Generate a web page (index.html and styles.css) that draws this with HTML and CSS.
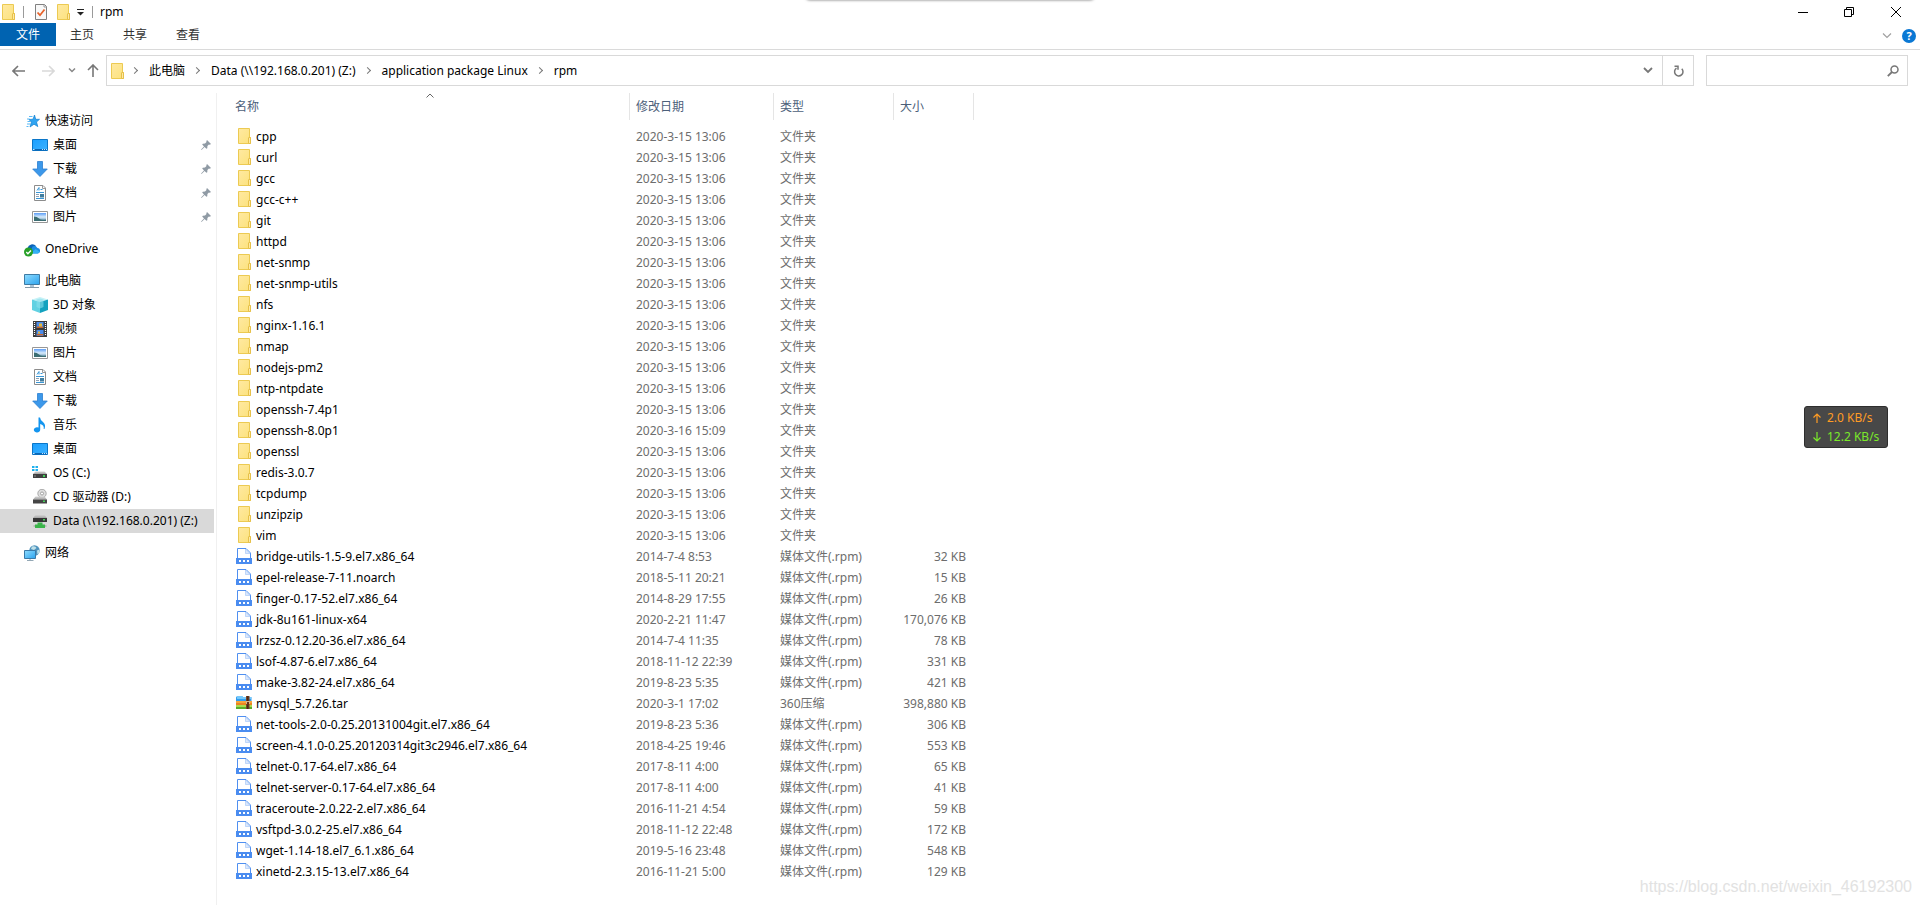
FILE: index.html
```html
<!DOCTYPE html>
<html lang="zh-CN">
<head>
<meta charset="utf-8">
<title>rpm</title>
<link rel="stylesheet" href="styles.css">
</head>
<body>
<svg class="sprite" aria-hidden="true">
  <defs>
    <linearGradient id="g-folder" x1="0" y1="0" x2="1" y2="1"><stop offset="0" stop-color="#ffe9a2"/><stop offset="1" stop-color="#fce27c"/></linearGradient>
    <linearGradient id="g-desk" x1="0" y1="0" x2="1" y2="1"><stop offset="0" stop-color="#1a9fff"/><stop offset="1" stop-color="#3db2ff"/></linearGradient>
    <linearGradient id="g-pc" x1="0" y1="0" x2="1" y2="1"><stop offset="0" stop-color="#8fdcff"/><stop offset="1" stop-color="#2ba3ee"/></linearGradient>
    <linearGradient id="g-pic" x1="0" y1="0" x2="0" y2="1"><stop offset="0" stop-color="#5b9cf5"/><stop offset=".5" stop-color="#d8ecfb"/><stop offset="1" stop-color="#5d8fb0"/></linearGradient>
    <linearGradient id="g-drive" x1="0" y1="0" x2="0" y2="1"><stop offset="0" stop-color="#d4d4d4"/><stop offset="1" stop-color="#a4a4a4"/></linearGradient>
  </defs>
  <symbol id="folder" viewBox="0 0 16 16"><path d="M2.500.5h11v9h1v6h-12z" fill="url(#g-folder)" stroke="#ecca52"/><path d="M12.500 15.500v-5.500q0-.5.5-.5h1.500v6z" fill="#ffeaa4" stroke="#e6c04a"/></symbol>
  <symbol id="rpm" viewBox="0 0 16 16"><path d="M1.500 10V.5h8.500l4.500 4.500v5" fill="#fff" stroke="#4f8ff0"/><path d="M9.500 1v4.500H14z" fill="#dbe8fc" stroke="#a9c8f8" stroke-width=".7"/><path d="M0 10h16v6H0z" fill="#4a8cf0"/><path d="M3 12h2v2H3zm4 0h2v2H7zm4 0h2v2h-2z" fill="#fff"/></symbol>
  <symbol id="zip" viewBox="0 0 16 16"><path d="M0 2.500 1 1h5l1 1h8.500v5H0z" fill="#2f9df0"/><path d="M1 1h5l1 1h8v2H1z" fill="#75c8fa"/><path d="M0 6h16v4H0z" fill="#f6a43c"/><path d="M0 8h16v2H0z" fill="#ec8420"/><path d="M0 10h16v2H0z" fill="#a8dc50"/><path d="M0 12h16v2H0z" fill="#5aac2c"/><path d="M10 1h3.500v13H10z" fill="#7b4526"/><path d="M11 1h1.500v13H11z" fill="#4b2817"/><path d="M10 6h4v3h-4z" fill="#d7b48a"/><path d="M11 7h2v3h-2z" fill="#633018"/></symbol>
  <symbol id="star" viewBox="0 0 16 16"><path d="m10.500 2 1.200 4.300H15.500L12.500 9l1.300 4.600L10 11.200 6 14 7.400 9.200 5 6.500l4-.3z" fill="#2fa4f2" stroke="#1380d0" stroke-width=".7"/><path d="M5 3.500h3.500M3 6h2.700M3.500 8.500H6M3 11h3.500M2.500 13.500h2" stroke="#46b1f5" stroke-width=".9"/></symbol>
  <symbol id="desktop" viewBox="0 0 16 16"><path d="M.5 2.500h15v11H.5z" fill="url(#g-desk)" stroke="#0b76c8"/><path d="M1 12h14v1.500H1z" fill="#0a66b5"/><path d="M1 12.500h1.500m7.500 0h1m1 0h1m1 0h1" stroke="#c5e6ff"/></symbol>
  <symbol id="download" viewBox="0 0 16 16"><path d="M5.500.5h5v7.500h4.800L8 15.500.7 8H5.500z" fill="#3c98ea" stroke="#2b7fd0" stroke-width=".8"/></symbol>
  <symbol id="doc" viewBox="0 0 16 16"><path d="M2.500.5h8.500l2.500 2.500v12.500h-11z" fill="#fff" stroke="#8c8c8c"/><path d="M10.500.5v3h3" fill="none" stroke="#9a9a9a"/><path d="M5 5.500 7 2.500v3M8.500 4.500h2M4 7.500h8M4 13.500h8" fill="none" stroke="#3996d6"/><path d="M4 9.500h3m-3 2h3" stroke="#8aa0b4"/><path d="M8 9h4v3.500H8z" fill="#407d9e"/></symbol>
  <symbol id="picture" viewBox="0 0 16 16"><path d="M.5 2.500h15v11H.5z" fill="#fff" stroke="#979797"/><path d="M2 4h12v8H2z" fill="url(#g-pic)"/><path d="M2 7.500q3 0 5 2t7 1v1.500H2z" fill="#3b6d72"/></symbol>
  <symbol id="pin" viewBox="0 0 10 10"><path d="M6 0 10 4 8.800 4.700 7.900 4.500 6.400 6 6.300 8.200 5.400 8.800 3.600 7 .8 9.700.2 9.900.3 9.200 3 6.400 1.200 4.600 1.800 3.700 4 3.600 5.500 2.100 5.300 1.200z" fill="#8f9aa4"/></symbol>
  <symbol id="onedrive" viewBox="0 0 16 16"><path d="M3.500 7A5 5 0 0 1 12 5l-3 6H3z" fill="#0a62b8"/><path d="M6 11.500 8.500 5.500a4 4 0 0 1 5 1.500 2.800 2.800 0 0 1 .5 5.500H7z" fill="#1a8de2"/><path d="M7 12.500 11.500 8l4 2.500a2.500 2.500 0 0 1-2 2z" fill="#34b1f5"/><circle cx="4.500" cy="11" r="4.500" fill="#28a028"/><path d="m2.300 11 1.600 1.700L7 9.500" fill="none" stroke="#fff" stroke-width="1.400"/></symbol>
  <symbol id="pc" viewBox="0 0 16 16"><path d="M.5 1.500h15v10H.5z" fill="url(#g-pc)" stroke="#3e7ba4"/><path d="M6 12h4v2H6z" fill="#a9c2d3"/><path d="M1 14.500h14" stroke="#8499a8"/></symbol>
  <symbol id="cube" viewBox="0 0 16 16"><path d="m0 2.500 8-2.500 8 2.500L8 5z" fill="#c7f2f7"/><path d="m0 2.500 8 2.500v11l-8-3z" fill="#62d1e2"/><path d="M8 5 16 2.500V13l-8 3z" fill="#13a2bf"/><path d="m4.500 2.500 3.500-1 3.500 1V10L8 11.500 4.500 10z" fill="#8be0ec" opacity=".6"/></symbol>
  <symbol id="video" viewBox="0 0 16 16"><path d="M1 0h14v16H1z" fill="#3b3b3b"/><path d="M2.500 1v14m11-14v14" stroke="#fff" stroke-width="1.200" stroke-dasharray="1 1"/><path d="M4.500 1h7v6h-7zm0 8h7v6h-7z" fill="#4b8bea"/><path d="M5 5.500h6V7H5zm0 7.500h6v1.500H5z" fill="#c9652c"/><path d="M7 2.500h3v3H7zm-1 8h2v2H6z" fill="#e3b83b"/></symbol>
  <symbol id="music" viewBox="0 0 16 16"><path d="M6.500.5H8q.3 2.500 3 4.600 3.200 2.600 1.500 6.900h-.8q.7-3.800-3.500-5v5.600A3.200 2.600 0 1 1 6.500 10.500z" fill="#1495ef"/></symbol>
  <symbol id="osdrive" viewBox="0 0 16 16"><path d="M0 1h2.500v2H0zm3.500 0H6v2H3.500zM0 4h2.500v2H0zm3.500 0H6v2H3.500z" fill="#1fb1ee"/><path d="m3.500 6.500h9L15 9H1z" fill="url(#g-drive)"/><path d="M1 9h14v4H1z" fill="#404040"/><path d="M2 11h2" stroke="#8a8a8a"/><path d="M11 10h2v2h-2z" fill="#44d15a"/></symbol>
  <symbol id="cddrive" viewBox="0 0 16 16"><circle cx="10" cy="4.500" r="4.200" fill="#dedede" stroke="#9a9a9a" stroke-width=".8"/><circle cx="10" cy="4.500" r="1.500" fill="#fff" stroke="#888" stroke-width=".7"/><path d="m3.500 7.500h9L15 10.500H1z" fill="url(#g-drive)"/><path d="M1 10.500h14v4H1z" fill="#444"/><path d="M11 11.500h2v1.500h-2z" fill="#44d15a"/></symbol>
  <symbol id="netdrive" viewBox="0 0 16 16"><path d="m3.500 2h9L15 5H1z" fill="url(#g-drive)"/><path d="M1 5h14v4H1z" fill="#363636"/><path d="M11 6h2v1.500h-2z" fill="#44d15a"/><path d="M5.500 9.500h5v2h2.500v3.500H3v-3.500h2.500z" fill="#3bb54a"/><path d="M1.500 13H3m10 0h1.500" stroke="#b6bcb6" stroke-width="2"/></symbol>
  <symbol id="network" viewBox="0 0 16 16"><circle cx="10.500" cy="5.500" r="5.200" fill="#4f93bd"/><path d="M8 1.500q3.500-1 4.500 1.500L10 5 7 4zm5 4 2.500-1v3l-2 2z" fill="#bfe0e8"/><path d="M.5 5.500h11v8H.5z" fill="url(#g-pc)" stroke="#3a7aa8"/><path d="M3 15.500h6.500M6 14v1" stroke="#94a8b5"/></symbol>
</svg>

<header class="window-head">
  <div class="titlebar">
    <svg class="icon"><use href="#folder"/></svg>
    <span class="bar"></span>
    <button class="plain quick" aria-label="属性"><svg class="icon" viewBox="0 0 16 16"><path d="M2.500.5h9l2 2v13h-11z" fill="#f8f8f8" stroke="#808080"/><path d="M11 .5v2.500h2.500" fill="none" stroke="#999"/><path d="m4.500 8.500 2.500 2.700 4.500-5.700" fill="none" stroke="#e8622a" stroke-width="1.800"/></svg></button>
    <button class="plain" aria-label="新建文件夹"><svg class="icon"><use href="#folder"/></svg></button>
    <button class="plain more" aria-label="自定义快速访问工具栏"><svg width="8" height="8" viewBox="0 0 8 8"><path d="M0 1.500h7" stroke="#222"/><path d="M0 4h7L3.500 7.500z" fill="#222"/></svg></button>
    <span class="bar"></span>
    <h1 class="title">rpm</h1>
    <div class="controls">
      <button class="plain" aria-label="最小化"><svg width="10" height="10" viewBox="0 0 10 10"><path d="M0 5.500h10" stroke="#000"/></svg></button>
      <button class="plain" aria-label="还原"><svg width="10" height="10" viewBox="0 0 10 10"><path d="M.5 2.500h7v7h-7zM2.500 2V.5h7v7H8" fill="none" stroke="#000"/></svg></button>
      <button class="plain" aria-label="关闭"><svg width="10" height="10" viewBox="0 0 10 10"><path d="m0 0 10 10M10 0 0 10" stroke="#000"/></svg></button>
    </div>
  </div>
  <nav class="tabs">
    <button class="tab tab-file">文件</button>
    <button class="tab">主页</button>
    <button class="tab">共享</button>
    <button class="tab">查看</button>
    <div class="help">
      <button class="plain" aria-label="展开功能区"><svg width="10" height="6" viewBox="0 0 10 6"><path d="m1 .5 4 4 4-4" fill="none" stroke="#a0a0a0" stroke-width="1.200"/></svg></button>
      <button class="help-button" aria-label="帮助">?</button>
    </div>
  </nav>
  <div class="tray-shadow"></div>
</header>

<div class="address-row">
  <div class="history">
    <button class="plain" aria-label="后退"><svg width="13" height="12" viewBox="0 0 13 12"><path d="M1 6h12M6 1 1 6l5 5" fill="none" stroke="#777" stroke-width="1.600"/></svg></button>
    <button class="plain" aria-label="前进"><svg width="13" height="12" viewBox="0 0 13 12"><path d="M0 6h12M7 1l5 5-5 5" fill="none" stroke="#d9d9d9" stroke-width="1.600"/></svg></button>
    <button class="plain recent" aria-label="最近浏览的位置"><svg width="8" height="5" viewBox="0 0 8 5"><path d="m1 .5 3 3 3-3" fill="none" stroke="#888" stroke-width="1.500"/></svg></button>
    <button class="plain" aria-label="上移"><svg width="12" height="13" viewBox="0 0 12 13"><path d="M6 13V1M1 6l5-5 5 5" fill="none" stroke="#777" stroke-width="1.600"/></svg></button>
  </div>
  <div class="address">
    <svg class="icon"><use href="#folder"/></svg>
    <ol class="crumbs">
      <li><a href="#">此电脑</a></li>
      <li><a href="#">Data (\\192.168.0.201) (Z:)</a></li>
      <li><a href="#">application package Linux</a></li>
      <li><a href="#">rpm</a></li>
    </ol>
    <button class="plain drop" aria-label="历史地址"><svg width="10" height="7" viewBox="0 0 10 7"><path d="m1 1 4 4 4-4" fill="none" stroke="#777" stroke-width="1.800"/></svg></button>
    <button class="plain refresh" aria-label="刷新"><svg width="11" height="12" viewBox="0 0 11 12"><path d="M8.800 3.800A4.200 4.200 0 1 1 3.500 3.200M1.500 1.200H5v3.600" fill="none" stroke="#777" stroke-width="1.500"/></svg></button>
  </div>
  <label class="search">
    <input type="search" aria-label="搜索">
    <svg width="12" height="12" viewBox="0 0 12 12"><circle cx="7.500" cy="4.500" r="3.500" fill="none" stroke="#777" stroke-width="1.500"/><path d="M5 7 .8 11.200" stroke="#777" stroke-width="1.800"/></svg>
  </label>
</div>

<main class="content">
  <nav class="sidebar">
    <ul class="group">
      <li><a class="item" href="#"><svg class="icon"><use href="#star"/></svg>快速访问</a></li>
      <li><a class="item child" href="#"><svg class="icon"><use href="#desktop"/></svg>桌面<svg class="pin"><use href="#pin"/></svg></a></li>
      <li><a class="item child" href="#"><svg class="icon"><use href="#download"/></svg>下载<svg class="pin"><use href="#pin"/></svg></a></li>
      <li><a class="item child" href="#"><svg class="icon"><use href="#doc"/></svg>文档<svg class="pin"><use href="#pin"/></svg></a></li>
      <li><a class="item child" href="#"><svg class="icon"><use href="#picture"/></svg>图片<svg class="pin"><use href="#pin"/></svg></a></li>
    </ul>
    <ul class="group">
      <li><a class="item" href="#"><svg class="icon"><use href="#onedrive"/></svg>OneDrive</a></li>
    </ul>
    <ul class="group">
      <li><a class="item" href="#"><svg class="icon"><use href="#pc"/></svg>此电脑</a></li>
      <li><a class="item child" href="#"><svg class="icon"><use href="#cube"/></svg>3D 对象</a></li>
      <li><a class="item child" href="#"><svg class="icon"><use href="#video"/></svg>视频</a></li>
      <li><a class="item child" href="#"><svg class="icon"><use href="#picture"/></svg>图片</a></li>
      <li><a class="item child" href="#"><svg class="icon"><use href="#doc"/></svg>文档</a></li>
      <li><a class="item child" href="#"><svg class="icon"><use href="#download"/></svg>下载</a></li>
      <li><a class="item child" href="#"><svg class="icon"><use href="#music"/></svg>音乐</a></li>
      <li><a class="item child" href="#"><svg class="icon"><use href="#desktop"/></svg>桌面</a></li>
      <li><a class="item child" href="#"><svg class="icon"><use href="#osdrive"/></svg>OS (C:)</a></li>
      <li><a class="item child" href="#"><svg class="icon"><use href="#cddrive"/></svg>CD 驱动器 (D:)</a></li>
      <li><a class="item child selected" href="#"><svg class="icon"><use href="#netdrive"/></svg>Data (\\192.168.0.201) (Z:)</a></li>
    </ul>
    <ul class="group">
      <li><a class="item" href="#"><svg class="icon"><use href="#network"/></svg>网络</a></li>
    </ul>
  </nav>

  <table class="files">
    <colgroup><col class="col-name"><col class="col-date"><col class="col-type"><col class="col-size"></colgroup>
    <thead>
      <tr><th>名称<svg class="sort" viewBox="0 0 8 5"><path d="m.5 4.500 3.500-3.500 3.500 3.500" fill="none" stroke="#666"/></svg></th><th>修改日期</th><th>类型</th><th>大小</th></tr>
    </thead>
    <tbody>
      <tr><td><svg class="icon"><use href="#folder"/></svg>cpp</td><td>2020-3-15 13:06</td><td>文件夹</td><td></td></tr>
      <tr><td><svg class="icon"><use href="#folder"/></svg>curl</td><td>2020-3-15 13:06</td><td>文件夹</td><td></td></tr>
      <tr><td><svg class="icon"><use href="#folder"/></svg>gcc</td><td>2020-3-15 13:06</td><td>文件夹</td><td></td></tr>
      <tr><td><svg class="icon"><use href="#folder"/></svg>gcc-c++</td><td>2020-3-15 13:06</td><td>文件夹</td><td></td></tr>
      <tr><td><svg class="icon"><use href="#folder"/></svg>git</td><td>2020-3-15 13:06</td><td>文件夹</td><td></td></tr>
      <tr><td><svg class="icon"><use href="#folder"/></svg>httpd</td><td>2020-3-15 13:06</td><td>文件夹</td><td></td></tr>
      <tr><td><svg class="icon"><use href="#folder"/></svg>net-snmp</td><td>2020-3-15 13:06</td><td>文件夹</td><td></td></tr>
      <tr><td><svg class="icon"><use href="#folder"/></svg>net-snmp-utils</td><td>2020-3-15 13:06</td><td>文件夹</td><td></td></tr>
      <tr><td><svg class="icon"><use href="#folder"/></svg>nfs</td><td>2020-3-15 13:06</td><td>文件夹</td><td></td></tr>
      <tr><td><svg class="icon"><use href="#folder"/></svg>nginx-1.16.1</td><td>2020-3-15 13:06</td><td>文件夹</td><td></td></tr>
      <tr><td><svg class="icon"><use href="#folder"/></svg>nmap</td><td>2020-3-15 13:06</td><td>文件夹</td><td></td></tr>
      <tr><td><svg class="icon"><use href="#folder"/></svg>nodejs-pm2</td><td>2020-3-15 13:06</td><td>文件夹</td><td></td></tr>
      <tr><td><svg class="icon"><use href="#folder"/></svg>ntp-ntpdate</td><td>2020-3-15 13:06</td><td>文件夹</td><td></td></tr>
      <tr><td><svg class="icon"><use href="#folder"/></svg>openssh-7.4p1</td><td>2020-3-15 13:06</td><td>文件夹</td><td></td></tr>
      <tr><td><svg class="icon"><use href="#folder"/></svg>openssh-8.0p1</td><td>2020-3-16 15:09</td><td>文件夹</td><td></td></tr>
      <tr><td><svg class="icon"><use href="#folder"/></svg>openssl</td><td>2020-3-15 13:06</td><td>文件夹</td><td></td></tr>
      <tr><td><svg class="icon"><use href="#folder"/></svg>redis-3.0.7</td><td>2020-3-15 13:06</td><td>文件夹</td><td></td></tr>
      <tr><td><svg class="icon"><use href="#folder"/></svg>tcpdump</td><td>2020-3-15 13:06</td><td>文件夹</td><td></td></tr>
      <tr><td><svg class="icon"><use href="#folder"/></svg>unzipzip</td><td>2020-3-15 13:06</td><td>文件夹</td><td></td></tr>
      <tr><td><svg class="icon"><use href="#folder"/></svg>vim</td><td>2020-3-15 13:06</td><td>文件夹</td><td></td></tr>
      <tr><td><svg class="icon"><use href="#rpm"/></svg>bridge-utils-1.5-9.el7.x86_64</td><td>2014-7-4 8:53</td><td>媒体文件(.rpm)</td><td>32 KB</td></tr>
      <tr><td><svg class="icon"><use href="#rpm"/></svg>epel-release-7-11.noarch</td><td>2018-5-11 20:21</td><td>媒体文件(.rpm)</td><td>15 KB</td></tr>
      <tr><td><svg class="icon"><use href="#rpm"/></svg>finger-0.17-52.el7.x86_64</td><td>2014-8-29 17:55</td><td>媒体文件(.rpm)</td><td>26 KB</td></tr>
      <tr><td><svg class="icon"><use href="#rpm"/></svg>jdk-8u161-linux-x64</td><td>2020-2-21 11:47</td><td>媒体文件(.rpm)</td><td>170,076 KB</td></tr>
      <tr><td><svg class="icon"><use href="#rpm"/></svg>lrzsz-0.12.20-36.el7.x86_64</td><td>2014-7-4 11:35</td><td>媒体文件(.rpm)</td><td>78 KB</td></tr>
      <tr><td><svg class="icon"><use href="#rpm"/></svg>lsof-4.87-6.el7.x86_64</td><td>2018-11-12 22:39</td><td>媒体文件(.rpm)</td><td>331 KB</td></tr>
      <tr><td><svg class="icon"><use href="#rpm"/></svg>make-3.82-24.el7.x86_64</td><td>2019-8-23 5:35</td><td>媒体文件(.rpm)</td><td>421 KB</td></tr>
      <tr><td><svg class="icon"><use href="#zip"/></svg>mysql_5.7.26.tar</td><td>2020-3-1 17:02</td><td>360压缩</td><td>398,880 KB</td></tr>
      <tr><td><svg class="icon"><use href="#rpm"/></svg>net-tools-2.0-0.25.20131004git.el7.x86_64</td><td>2019-8-23 5:36</td><td>媒体文件(.rpm)</td><td>306 KB</td></tr>
      <tr><td><svg class="icon"><use href="#rpm"/></svg>screen-4.1.0-0.25.20120314git3c2946.el7.x86_64</td><td>2018-4-25 19:46</td><td>媒体文件(.rpm)</td><td>553 KB</td></tr>
      <tr><td><svg class="icon"><use href="#rpm"/></svg>telnet-0.17-64.el7.x86_64</td><td>2017-8-11 4:00</td><td>媒体文件(.rpm)</td><td>65 KB</td></tr>
      <tr><td><svg class="icon"><use href="#rpm"/></svg>telnet-server-0.17-64.el7.x86_64</td><td>2017-8-11 4:00</td><td>媒体文件(.rpm)</td><td>41 KB</td></tr>
      <tr><td><svg class="icon"><use href="#rpm"/></svg>traceroute-2.0.22-2.el7.x86_64</td><td>2016-11-21 4:54</td><td>媒体文件(.rpm)</td><td>59 KB</td></tr>
      <tr><td><svg class="icon"><use href="#rpm"/></svg>vsftpd-3.0.2-25.el7.x86_64</td><td>2018-11-12 22:48</td><td>媒体文件(.rpm)</td><td>172 KB</td></tr>
      <tr><td><svg class="icon"><use href="#rpm"/></svg>wget-1.14-18.el7_6.1.x86_64</td><td>2019-5-16 23:48</td><td>媒体文件(.rpm)</td><td>548 KB</td></tr>
      <tr><td><svg class="icon"><use href="#rpm"/></svg>xinetd-2.3.15-13.el7.x86_64</td><td>2016-11-21 5:00</td><td>媒体文件(.rpm)</td><td>129 KB</td></tr>
    </tbody>
  </table>
</main>

<aside class="netspeed">
  <div class="speed up"><svg width="8" height="10" viewBox="0 0 8 10"><path d="M4 10V1M.5 4.500 4 1l3.500 3.500" fill="none" stroke="currentColor" stroke-width="1.200"/></svg>2.0 KB/s</div>
  <div class="speed down"><svg width="8" height="10" viewBox="0 0 8 10"><path d="M4 0v9M.5 5.500 4 9l3.500-3.500" fill="none" stroke="currentColor" stroke-width="1.200"/></svg>12.2 KB/s</div>
</aside>
<div class="watermark">https://blog.csdn.net/weixin_46192300</div>
</body>
</html>
```
FILE: styles.css
```css
* { box-sizing: border-box; }

body {
  margin: 0;
  min-height: 100vh;
  display: flex;
  flex-direction: column;
  background: #fff;
  color: #000;
  font: 12px/20px "Noto Sans", "Noto Sans CJK SC", sans-serif;
  overflow: hidden;
}

ul, ol { margin: 0; padding: 0; list-style: none; }
a { color: inherit; text-decoration: none; }
button { font: inherit; color: inherit; border: 0; padding: 0; background: none; }
svg { display: block; flex: none; }

.sprite { position: absolute; width: 0; height: 0; }
.icon { width: 16px; height: 16px; }
.plain { display: flex; align-items: center; justify-content: center; }

/* Title bar and ribbon tabs */
.window-head { position: relative; border-bottom: 1px solid #dadada; }
.titlebar { display: flex; align-items: center; height: 23px; }
.bar { width: 1px; height: 12px; margin: 0 7px; background: #9a9a9a; }
.quick { margin: 0 6px 0 2px; }
.more { margin: 0 0 0 6px; }
.title { margin: 0; font-size: 12px; font-weight: 400; }
.controls { display: flex; margin-left: auto; }
.controls .plain { width: 46px; height: 20px; }
.controls .plain:last-child { width: 48px; }

.tabs { display: flex; align-items: flex-start; height: 26px; }
.tab { height: 23px; padding: 1px 14px 0; margin-right: 1px; color: #333; }
.tab-file { width: 56px; margin: 0; background: #0063b1; color: #fff; }
.help { display: flex; align-items: center; gap: 10px; height: 26px; margin-left: auto; padding-right: 4px; }
.help-button { width: 14px; height: 14px; border-radius: 50%; background: #0a78d4; color: #fff; font-size: 11px; font-weight: 700; line-height: 14px; text-align: center; }
.tray-shadow { position: absolute; top: -8px; left: 42%; right: 43%; height: 8px; border-radius: 4px; box-shadow: 0 0 3px rgba(0, 0, 0, .6); }

/* Address row */
.address-row { display: flex; padding: 5px 12px 6px; }
.history { display: flex; align-items: center; gap: 17px; width: 94px; }
.recent { margin: 0 -6px 0 -4px; }
.address { display: flex; flex: 1; align-items: center; height: 31px; padding-left: 2px; border: 1px solid #d9d9d9; }
.crumbs { display: flex; align-items: center; }
.crumbs li { display: flex; align-items: center; }
.crumbs li::before { content: ""; width: 4px; height: 4px; margin: 0 12px 0 9px; border: solid #777; border-width: 1px 1px 0 0; transform: rotate(45deg); }
.crumbs li:first-child::before { margin-left: 7px; }
.drop { width: 28px; margin-left: auto; }
.refresh { width: 31px; height: 29px; border-left: 1px solid #d9d9d9; }
.search { display: flex; align-items: center; width: 202px; height: 31px; margin-left: 12px; padding-right: 8px; border: 1px solid #d9d9d9; }
.search input { flex: 1; min-width: 0; height: 100%; border: 0; padding: 0 6px; outline: 0; font: inherit; }

/* Panes */
.content { display: flex; flex: 1; align-items: stretch; padding-top: 1px; }
.sidebar { width: 217px; flex: none; padding: 16px 2px 0 0; border-right: 1px solid #f0f0f0; }
.group { margin-bottom: 8px; }
.item { display: flex; align-items: center; gap: 5px; height: 24px; padding: 0 3px 0 24px; white-space: nowrap; }
.child { padding-left: 32px; }
.selected { background: #d9d9d9; }
.pin { width: 10px; height: 10px; margin-left: auto; }

.files { align-self: flex-start; width: 757px; table-layout: fixed; border-collapse: separate; border-spacing: 0; }
.col-name { width: 413px; }
.col-date { width: 144px; }
.col-type { width: 120px; }
.col-size { width: 80px; }
.files th { position: relative; height: 27px; padding: 0 6px; border-right: 1px solid #e5e5e5; color: #4c607a; font-weight: 400; text-align: left; }
.files th:first-child { padding-left: 18px; }
.sort { position: absolute; top: 0; left: 209px; width: 8px; height: 5px; }
.files tbody::before { content: ""; display: block; height: 6px; }
.files td { height: 21px; padding: 0 6px; color: #6d6d6d; white-space: nowrap; }
.files td:first-child { display: flex; align-items: center; gap: 4px; padding-left: 19px; color: #000; }
.files td:last-child { padding-right: 8px; text-align: right; }
.files .icon { margin-bottom: 1px; }

/* Overlays */
.netspeed { position: absolute; top: 406px; right: 32px; width: 84px; padding: 1px 0 1px 8px; border: 1px solid #2e2e2e; border-radius: 3px; background: #484848; }
.speed { display: flex; align-items: center; gap: 6px; height: 19px; }
.up { color: #ff9c24; }
.down { color: #7be92a; }
.watermark { position: absolute; right: 8px; bottom: 8px; color: #e2e2e2; font: 16px/20px "Liberation Sans", sans-serif; }
```
